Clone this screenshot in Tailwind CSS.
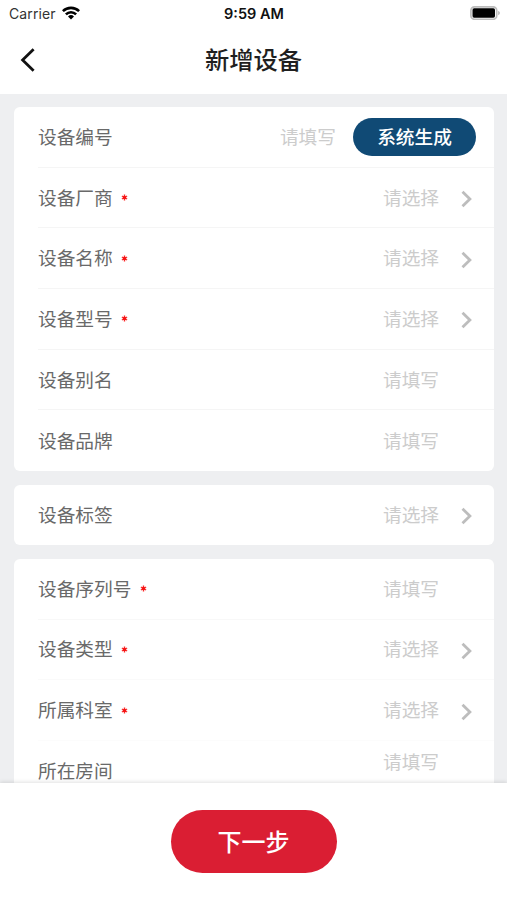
<!DOCTYPE html>
<html lang="zh-CN">
<head>
<meta charset="utf-8">
<meta name="viewport" content="width=device-width, initial-scale=1">
<title>新增设备</title>
<script src="https://cdn.jsdelivr.net/npm/@tailwindcss/browser@4"></script>
</head>
<body class="h-[900px] w-[507px] overflow-hidden bg-[#eeeff1] font-['Noto_Sans_CJK_SC',sans-serif] text-[18.7px] leading-[28px] text-[#696969]">
<svg class="hidden">
  <symbol id="chevron" viewBox="0 0 12 18"><path d="M1.5 1.8 8.9 9l-7.4 7.2" fill="none" stroke="#bdbdbd" stroke-width="2.8"/></symbol>
  <symbol id="star" viewBox="0 0 7 7"><path d="M3.5.5v6M.9 2l5.2 3M6.1 2 .9 5" stroke="#fa2a2a" stroke-width="1.4"/><circle cx="3.5" cy="3.5" r="1.7" fill="#f51414"/></symbol>
</svg>
<div class="flex h-full flex-col">
  <header class="h-[94px] shrink-0 bg-white">
    <div class="grid h-[27px] grid-cols-3 items-center pr-[7px] pl-[9px] font-['Inter',sans-serif] text-[14px] leading-[20px] text-black">
      <div class="flex items-center gap-[6px]">
        <span class="w-[47px] text-[14px] tracking-[0.1px] text-[#333333]">Carrier</span>
        <svg class="mb-[2px] h-[14px] w-[18px]" viewBox="0 0 18 14"><g fill="none" stroke="#000" stroke-width="2.6"><path d="M.9 5.2a11.5 11.5 0 0 1 16.2 0"/><path d="M3.9 8.4a7.2 7.2 0 0 1 10.2 0"/></g><path d="M9 13.4 6 10.5a4.3 4.3 0 0 1 6 0Z"/></svg>
      </div>
      <div class="pr-[1px] text-center text-[14.5px] font-semibold whitespace-nowrap text-[#111111]">9:59 AM</div>
      <svg class="mb-[1px] h-[14px] w-[30px] justify-self-end" viewBox="0 0 30 14"><rect x=".9" y=".9" width="25.8" height="12.4" rx="3.6" fill="#fff" stroke="#bcbcbc" stroke-width="1.7"/><rect x="2.5" y="2.3" width="22.5" height="9.4" rx="1.6" fill="#000"/><path d="M28.2 4.8q1.7.8 1.7 2.2t-1.7 2.2Z" fill="#b5b5b5"/></svg>
    </div>
    <div class="grid h-[65px] grid-cols-[60px_1fr_60px] items-center">
      <svg class="ml-[20px] h-[24px] w-[16px]" viewBox="0 0 16 24"><path d="M13.6 1.2 2.6 12l11 10.8" fill="none" stroke="#111" stroke-width="2.8"/></svg>
      <h1 class="pb-[2px] text-center text-[24.3px] leading-[36px] font-medium text-[#1f1f1f]">新增设备</h1>
    </div>
  </header>

  <main class="flex min-h-0 flex-1 flex-col gap-[13.5px] overflow-hidden pt-[13px] pr-[13px] pl-[14px]">
    <section class="shrink-0 rounded-[6px] bg-white pl-[24px]">
      <div class="flex h-[60.7px] items-center border-b border-[#f5f5f5] pr-[18px] pb-[2px]">
        <span class="flex-1">设备编号</span><span class="mr-[17px] text-[#cccccc]">请填写</span>
        <button class="mt-[2px] h-[38px] w-[123px] rounded-full bg-[#104a75] pb-[2px] font-medium text-white">系统生成</button>
      </div>
      <div class="flex h-[60.7px] items-center border-b border-[#f5f5f5] pr-[21px] pb-[2px]">
        <span>设备厂商</span><span class="ml-[8px] flex-1"><svg class="mt-[2px] size-[7px]"><use href="#star"/></svg></span><span class="w-[78px] text-[#cccccc]">请选择</span><svg class="mt-[5px] h-[18px] w-[12px]"><use href="#chevron"/></svg>
      </div>
      <div class="flex h-[60.7px] items-center border-b border-[#f5f5f5] pr-[21px] pb-[2px]">
        <span>设备名称</span><span class="ml-[8px] flex-1"><svg class="mt-[2px] size-[7px]"><use href="#star"/></svg></span><span class="w-[78px] text-[#cccccc]">请选择</span><svg class="mt-[5px] h-[18px] w-[12px]"><use href="#chevron"/></svg>
      </div>
      <div class="flex h-[60.7px] items-center border-b border-[#f5f5f5] pr-[21px] pb-[2px]">
        <span>设备型号</span><span class="ml-[8px] flex-1"><svg class="mt-[2px] size-[7px]"><use href="#star"/></svg></span><span class="w-[78px] text-[#cccccc]">请选择</span><svg class="mt-[5px] h-[18px] w-[12px]"><use href="#chevron"/></svg>
      </div>
      <div class="flex h-[60.7px] items-center border-b border-[#f5f5f5] pr-[21px] pb-[2px]">
        <span class="flex-1">设备别名</span><span class="w-[90px] text-[#cccccc]">请填写</span>
      </div>
      <div class="flex h-[60.7px] items-center pr-[21px] pb-[2px]">
        <span class="flex-1">设备品牌</span><span class="w-[90px] text-[#cccccc]">请填写</span>
      </div>
    </section>

    <section class="shrink-0 rounded-[6px] bg-white pl-[24px]">
      <div class="flex h-[60.7px] items-center pr-[21px] pb-[2px]">
        <span class="flex-1">设备标签</span><span class="w-[78px] text-[#cccccc]">请选择</span><svg class="mt-[5px] h-[18px] w-[12px]"><use href="#chevron"/></svg>
      </div>
    </section>

    <section class="shrink-0 rounded-t-[6px] bg-white pl-[24px]">
      <div class="flex h-[60.7px] items-center border-b border-[#f8f8f8] pr-[21px] pb-[2px]">
        <span>设备序列号</span><span class="ml-[9px] flex-1"><svg class="mt-[2px] size-[7px]"><use href="#star"/></svg></span><span class="w-[90px] text-[#cccccc]">请填写</span>
      </div>
      <div class="flex h-[60.7px] items-center border-b border-[#fafafa] pr-[21px] pb-[2px]">
        <span>设备类型</span><span class="ml-[8px] flex-1"><svg class="mt-[2px] size-[7px]"><use href="#star"/></svg></span><span class="w-[78px] text-[#cccccc]">请选择</span><svg class="mt-[5px] h-[18px] w-[12px]"><use href="#chevron"/></svg>
      </div>
      <div class="flex h-[60.7px] items-center border-b border-[#fcfcfc] pr-[21px] pb-[2px]">
        <span>所属科室</span><span class="ml-[8px] flex-1"><svg class="mt-[2px] size-[7px]"><use href="#star"/></svg></span><span class="w-[78px] text-[#cccccc]">请选择</span><svg class="mt-[5px] h-[18px] w-[12px]"><use href="#chevron"/></svg>
      </div>
      <div class="flex h-[60.7px] items-center pr-[21px] pb-[3px]">
        <span class="flex-1">所在房间</span><span class="mb-[17px] w-[90px] text-[#cccccc]">请填写</span>
      </div>
    </section>
  </main>

  <footer class="z-10 flex h-[117px] shrink-0 justify-center bg-white pt-[27px] shadow-[0_-1px_4px_rgba(0,0,0,0.12)]">
    <button class="h-[63px] w-[166px] rounded-full bg-[#da1e33] pb-[2px] text-[24px] leading-[36px] font-medium text-white">下一步</button>
  </footer>
</div>
</body>
</html>
